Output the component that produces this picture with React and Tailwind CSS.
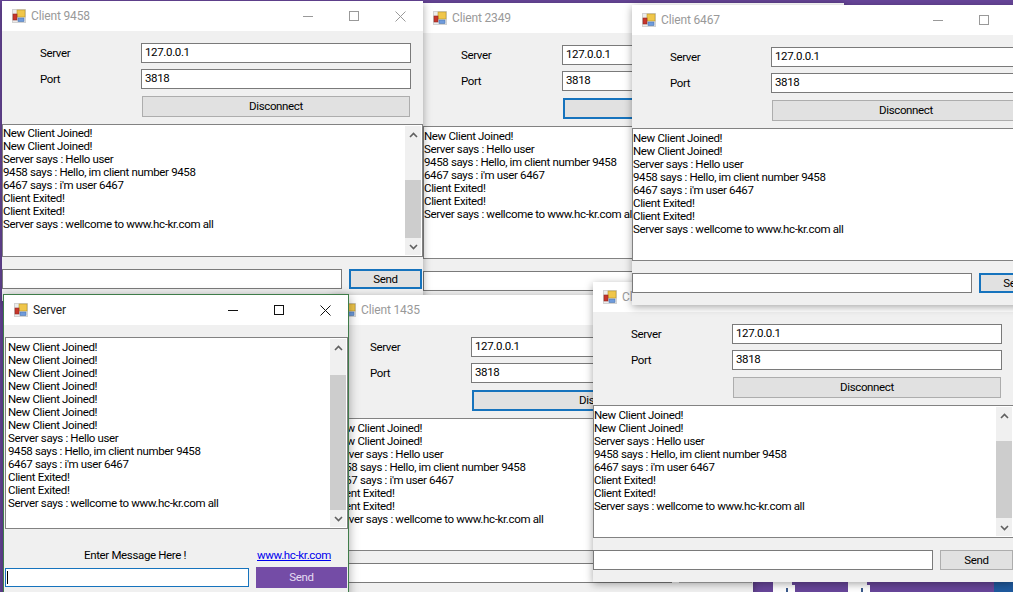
import React from 'react';

const clientLines = [
  'New Client Joined!',
  'New Client Joined!',
  'Server says : Hello user',
  '9458 says : Hello, im client number 9458',
  "6467 says : i'm user 6467",
  'Client Exited!',
  'Client Exited!',
  'Server says : wellcome to www.hc-kr.com all',
];

const serverLines = [
  'New Client Joined!',
  'New Client Joined!',
  'New Client Joined!',
  'New Client Joined!',
  'New Client Joined!',
  'New Client Joined!',
  'New Client Joined!',
  ...clientLines.slice(2),
];

function AppIcon() {
  return (
    <svg width="14" height="14" viewBox="0 0 14 14" className="shrink-0">
      <rect x="0.5" y="0.5" width="13" height="13" fill="#ececec" stroke="#d2d2d2" />
      <rect x="5" y="1" width="8" height="7" fill="#f0c64a" stroke="#b8962e" strokeWidth="0.6" />
      <rect x="1" y="5" width="4" height="6" fill="#c8352b" stroke="#8f2a22" strokeWidth="0.6" />
      <rect x="6" y="9" width="6" height="3.5" fill="#6f9bdc" stroke="#4a75b0" strokeWidth="0.6" />
    </svg>
  );
}

function WindowButtons({ color }) {
  return (
    <div className="ml-auto flex h-full" style={{ color }}>
      <div className="flex w-[46px] items-center justify-center">
        <svg width="10" height="10" viewBox="0 0 10 10"><path d="M0 5.5h10" stroke="currentColor" fill="none" /></svg>
      </div>
      <div className="flex w-[46px] items-center justify-center">
        <svg width="10" height="10" viewBox="0 0 10 10"><rect x="0.5" y="0.5" width="9" height="9" stroke="currentColor" fill="none" /></svg>
      </div>
      <div className="flex w-[46px] items-center justify-center">
        <svg width="11" height="11" viewBox="0 0 11 11"><path d="M0.5 0.5l10 10M10.5 0.5l-10 10" stroke="currentColor" fill="none" /></svg>
      </div>
    </div>
  );
}

function TitleBar({ title, active }) {
  return (
    <div className="flex h-[30px] shrink-0 items-center bg-white pl-[10px]">
      <AppIcon />
      <span className={`ml-[5px] text-[12px] tracking-[-0.15px] ${active ? 'text-[#222]' : 'text-[#999]'}`}>{title}</span>
      <WindowButtons color={active ? '#111' : '#999'} />
    </div>
  );
}

function Scrollbar({ thumb, bar }) {
  return (
    <div className={`flex w-[16px] shrink-0 flex-col bg-[#f0f0f0] ${bar}`}>
      <div className="flex h-[17px] shrink-0 items-center justify-center">
        <svg width="9" height="6" viewBox="0 0 9 6"><path d="M1 5l3.5-3.5L8 5" stroke="#606060" strokeWidth="1.6" fill="none" /></svg>
      </div>
      <div className="flex-1">
        <div className={`bg-[#cdcdcd] ${thumb}`} />
      </div>
      <div className="flex h-[17px] shrink-0 items-center justify-center">
        <svg width="9" height="6" viewBox="0 0 9 6"><path d="M1 1l3.5 3.5L8 1" stroke="#606060" strokeWidth="1.6" fill="none" /></svg>
      </div>
    </div>
  );
}

function LogBox({ lines, className, thumb, textClass = 'pt-[3px]' }) {
  return (
    <div className={`flex border border-[#828282] bg-white ${className}`}>
      <div className={`flex-1 overflow-hidden text-[11.5px] leading-[13px] text-black ${textClass}`}>
        {lines.map((line, i) => (
          <div key={i} className="whitespace-nowrap">{line}</div>
        ))}
      </div>
      <Scrollbar thumb={thumb} bar="my-[1px] mr-[1px]" />
    </div>
  );
}

function TextBox({ value, className }) {
  return (
    <div className={`flex h-[20px] items-center border border-[#7a7a7a] bg-white pl-[3px] text-[11.5px] text-black ${className}`}>
      {value}
    </div>
  );
}

function ActionButton({ label, focused, className }) {
  return (
    <div
      className={`flex items-center justify-center bg-[#e1e1e1] pt-px text-[11.5px] text-black ${
        focused ? 'border-2 border-[#1673bd]' : 'border border-[#adadad]'
      } ${className}`}
    >
      {label}
    </div>
  );
}

function ClientWindow({ title, className, focus, thumb, lines = clientLines, textClass }) {
  return (
    <div className={`absolute flex h-[300px] w-[421px] flex-col bg-[#f0f0f0] shadow-[0_2px_8px_rgba(0,0,0,0.35)] ${className}`}>
      <TitleBar title={title} />
      <div className="mt-[12px] flex items-center">
        <span className="w-[139px] pt-px pl-[38px] text-[11.5px] text-black">Server</span>
        <TextBox value="127.0.0.1" className="w-[270px]" />
      </div>
      <div className="mt-[6px] flex items-center">
        <span className="w-[139px] pt-px pl-[38px] text-[11.5px] text-black">Port</span>
        <TextBox value="3818" className="w-[270px]" />
      </div>
      <div className="mt-[7px] pl-[140px]">
        <ActionButton label="Disconnect" focused={focus === 'disconnect'} className="h-[21px] w-[268px]" />
      </div>
      <LogBox lines={lines} thumb={thumb} textClass={textClass} className="mt-[7px] h-[133px] w-[421px] shrink-0" />
      <div className="mt-[12px] flex">
        <TextBox value="" className="w-[340px]" />
        <ActionButton label="Send" focused={focus === 'send'} className="ml-[7px] h-[20px] w-[73px]" />
      </div>
    </div>
  );
}

function ServerWindow() {
  return (
    <div className="absolute top-[294px] left-[3px] flex h-[320px] w-[346px] flex-col border border-[#3f7d4a] bg-[#f0f0f0] shadow-[0_2px_10px_rgba(0,0,0,0.35)]">
      <TitleBar title="Server" active />
      <LogBox lines={serverLines} thumb="mt-[19px] h-[135px]" textClass="pt-[3px] pl-[2px]" className="mt-[12px] ml-[1px] h-[192px] w-[343px] shrink-0" />
      <div className="mt-[20px] flex h-[14px] items-center whitespace-nowrap text-[11.5px]">
        <span className="ml-[80px] w-[173px] text-black">Enter Message Here !</span>
        <span className="text-[#0000ee] underline">www.hc-kr.com</span>
      </div>
      <div className="mt-[4px] flex items-center">
        <div className="ml-[1px] flex h-[19px] w-[244px] items-center border border-[#1673bd] bg-white pl-[1px]">
          <div className="h-[13px] w-px bg-black" />
        </div>
        <div className="ml-[7px] flex h-[21px] w-[91px] items-center justify-center bg-[#744ca6] text-[11.5px] text-[#e6dcf2]">Send</div>
      </div>
    </div>
  );
}

// desktop icons that peek out under the windows
function DesktopIcon({ className }) {
  return (
    <div className={`absolute top-[582px] h-[10px] w-[22px] bg-white ${className}`}>
      <div className="absolute top-0 right-0 h-[3px] w-[3px] bg-[#6a4a9c]" />
      <div className="absolute top-[6px] left-[13px] h-[4px] w-[2px] bg-[#3a5a8c]" />
    </div>
  );
}

export default function App() {
  return (
    <div className="relative h-[592px] w-[1013px] overflow-hidden bg-[#68469a] font-['Roboto','Liberation_Sans',Arial,sans-serif] tracking-[-0.35px]">
      <DesktopIcon className="left-[773px]" />
      <DesktopIcon className="left-[848px]" />
      <div className="absolute top-[582px] left-[994px] h-[10px] w-[19px] bg-[#1f5a9e]" />

      <ClientWindow title="Client 2349" focus="disconnect" thumb="mt-[37px] h-[58px]" lines={clientLines.slice(1)} className="top-[3px] left-[423px]" />
      <ClientWindow title="Client 9458" focus="send" thumb="mt-[37px] h-[58px]" textClass="pt-[2px]" className="top-[1px] left-[2px]" />
      <ClientWindow title="Client 1435" focus="disconnect" thumb="mt-[37px] h-[58px]" className="top-[295px] left-[332px]" />
      <ClientWindow title="Client" thumb="mt-[17px] h-[77px]" className="top-[282px] left-[593px]" />
      <ClientWindow title="Client 6467" focus="send" thumb="mt-[37px] h-[58px]" className="top-[5px] left-[632px]" />
      <ServerWindow />
    </div>
  );
}
